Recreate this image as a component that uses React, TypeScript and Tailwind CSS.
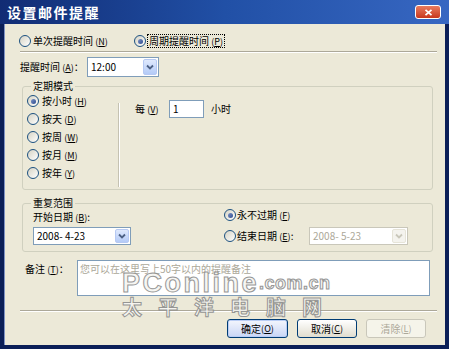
import React from "react";

function Radio({ checked }: { checked?: boolean }) {
  return (
    <span className="w-[12px] h-[12px] shrink-0 rounded-full border border-[#1c5180] bg-linear-to-br from-[#d6d3c4] to-white flex items-center justify-center">
      {checked && <span className="w-[5px] h-[5px] rounded-full bg-linear-to-br from-[#7d93c6] to-[#2f4c8f]" />}
    </span>
  );
}

function Chevron({ color }: { color: string }) {
  return (
    <svg width="8" height="6" viewBox="0 0 8 6">
      <path d="M1 1.5 L4 4.5 L7 1.5" fill="none" stroke={color} strokeWidth="1.8" />
    </svg>
  );
}

function DropBtn({ disabled }: { disabled?: boolean }) {
  return disabled ? (
    <span className="w-[14px] shrink-0 rounded-[2px] border border-[#e6e4d8] bg-[#f4f3ee] flex items-center justify-center">
      <Chevron color="#c9c7ba" />
    </span>
  ) : (
    <span className="w-[14px] shrink-0 rounded-[2px] border border-[#b6c9f3] bg-linear-to-b from-[#dfe9fd] to-[#b4cbf7] flex items-center justify-center">
      <Chevron color="#4d6185" />
    </span>
  );
}

function Acc({ k }: { k: string }) {
  return (
    <span className="text-[9px]">
      (<span className="underline">{k}</span>)
    </span>
  );
}

export default function App() {
  const modes = [
    { t: "按小时", k: "H", c: true },
    { t: "按天", k: "D", c: false },
    { t: "按周", k: "W", c: false },
    { t: "按月", k: "M", c: false },
    { t: "按年", k: "Y", c: false },
  ];
  return (
    <div className="w-[449px] h-[349px] bg-[#0b1f57] flex flex-col overflow-hidden text-[10px] leading-[12px] text-black font-['Noto_Sans_CJK_SC','Noto_Sans',sans-serif]">
      {/* title bar */}
      <div className="h-[24px] shrink-0 flex items-center bg-linear-to-r from-[#112c74] via-[#2150a6] to-[#3767c2]">
        <span className="ml-[7px] text-white font-bold text-[14px] leading-[16px] tracking-[1.5px]">设置邮件提醒</span>
        <span className="ml-auto mr-[8px] w-[26px] h-[14px] rounded-[3px] border border-white bg-linear-to-b from-[#e87a5e] to-[#c8361c] flex items-center justify-center">
          <svg width="9" height="7" viewBox="0 0 9 7">
            <path d="M1.5 0.8 L7.5 6.2 M7.5 0.8 L1.5 6.2" stroke="white" strokeWidth="1.7" />
          </svg>
        </span>
      </div>

      {/* body */}
      <div className="flex-1 mx-[4px] mb-[4px] bg-[#ece9d8] relative flex flex-col border-l border-[#7f93c4]">
        {/* row 1 */}
        <div className="mt-[11px] h-[12px] flex items-center ml-[14px]">
          <div className="w-[115px] flex items-center">
            <Radio />
            <span className="ml-[2px]">
              单次提醒时间 <Acc k="N" />
            </span>
          </div>
          <Radio checked />
          <span className="ml-[1px] px-[1px] border border-dotted border-black leading-[11px]">
            周期提醒时间 <Acc k="P" />
          </span>
        </div>
        <div className="mt-[4px] ml-[15px] w-[417px] h-[2px] border-t border-[#aca899] bg-white" />

        {/* reminder time */}
        <div className="mt-[4px] ml-[15px] h-[20px] flex items-center">
          <span className="w-[67px]">
            提醒时间 <Acc k="A" />：
          </span>
          <div className="w-[72px] h-[20px] bg-white border border-[#7f9db9] p-[1px] flex">
            <span className="flex-1 pl-[2px] flex items-center">12:00</span>
            <DropBtn />
          </div>
        </div>

        {/* group 1 */}
        <fieldset className="mt-[3px] ml-[17px] w-[411px] h-[110px] border border-[#d0d0bf] rounded-[3px]">
          <legend className="ml-[8px] px-[2px] h-[12px] leading-[12px]">定期模式</legend>
          <div className="flex">
            <div className="w-[95px] pl-[4px] flex flex-col">
              {modes.map((m) => (
                <div key={m.k} className="h-[18px] flex items-center">
                  <Radio checked={m.c} />
                  <span className="ml-[3px]">
                    {m.t} <Acc k={m.k} />
                  </span>
                </div>
              ))}
            </div>
            <div className="mt-[11px] h-[84px] w-[2px] border-l border-[#c5c2b2] bg-white" />
            <div className="ml-[15px] mt-[8px] h-[18px] flex items-center">
              <span className="w-[34px]">
                每 <Acc k="V" />
              </span>
              <div className="w-[35px] h-[18px] bg-white border border-[#7f9db9] pl-[3px] flex items-center">1</div>
              <span className="ml-[7px]">小时</span>
            </div>
          </div>
        </fieldset>

        {/* group 2 */}
        <fieldset className="mt-[7px] ml-[17px] w-[411px] pb-[6px] border border-[#d0d0bf] rounded-[3px]">
          <legend className="ml-[8px] px-[2px] h-[12px] leading-[12px]">重复范围</legend>
          <div className="flex">
            <div className="w-[201px] pl-[10px] flex flex-col">
              <span className="mt-[2px] h-[12px]">
                开始日期 <Acc k="B" />:
              </span>
              <div className="mt-[4px] w-[98px] h-[18px] bg-white border border-[#7f9db9] p-[1px] flex">
                <span className="flex-1 pl-[2px] flex items-center">2008- 4-23</span>
                <DropBtn />
              </div>
            </div>
            <div className="flex flex-col">
              <div className="h-[12px] flex items-center">
                <Radio checked />
                <span className="ml-[1px]">
                  永不过期 <Acc k="F" />
                </span>
              </div>
              <div className="mt-[6px] h-[18px] flex items-center">
                <Radio />
                <span className="ml-[1px] w-[72px]">
                  结束日期 <Acc k="E" />:
                </span>
                <div className="w-[99px] h-[18px] bg-white border border-[#c9c7ba] p-[1px] flex text-[#aca899]">
                  <span className="flex-1 pl-[2px] flex items-center">2008- 5-23</span>
                  <DropBtn disabled />
                </div>
              </div>
            </div>
          </div>
        </fieldset>

        {/* note */}
        <div className="mt-[8px] ml-[20px] flex items-start">
          <span className="w-[52px] mt-[3px] h-[12px]">
            备注 <Acc k="T" />：
          </span>
          <div className="w-[353px] h-[36px] bg-white border border-[#7f9db9] pl-[2px] pt-[2px] text-[#aca899]">
            您可以在这里写上50字以内的提醒备注
          </div>
        </div>

        <div className="mt-[14px] ml-[15px] w-[417px] h-[2px] border-t border-[#aca899] bg-white" />

        {/* buttons */}
        <div className="mt-[7px] ml-[222px] flex gap-[9px]">
          <button className="w-[61px] h-[19px] rounded-[3px] border border-[#003c74] bg-linear-to-b from-[#f4f6fd] to-[#c9d6f5] shadow-[inset_0_0_0_1px_#b9cdf5] flex items-center justify-center">
            确定 <Acc k="O" />
          </button>
          <button className="w-[60px] h-[19px] rounded-[3px] border border-[#003c74] bg-linear-to-b from-white to-[#e0ddcf] flex items-center justify-center">
            取消 <Acc k="C" />
          </button>
          <button className="w-[60px] h-[19px] rounded-[3px] border border-[#c9c7ba] bg-[#f5f4ea] text-[#aca899] flex items-center justify-center">
            清除 <Acc k="L" />
          </button>
        </div>

        {/* watermark */}
        <div className="absolute left-[117px] top-[244px] flex flex-col items-start pointer-events-none text-[#f6f6f2] opacity-90 font-['Liberation_Sans',sans-serif] font-bold [-webkit-text-stroke:1px_#8c8c8c]">
          <div className="h-[28px] flex items-end leading-[26px]">
            <span className="text-[27px] tracking-[2.5px]">PConline</span>
            <span className="text-[18px] tracking-[0.5px]">.com.cn</span>
          </div>
          <div className="mt-[0px] h-[22px] text-[20px] leading-[22px] tracking-[16px] font-['Noto_Sans_CJK_SC',sans-serif]">太平洋电脑网</div>
        </div>
      </div>
    </div>
  );
}
